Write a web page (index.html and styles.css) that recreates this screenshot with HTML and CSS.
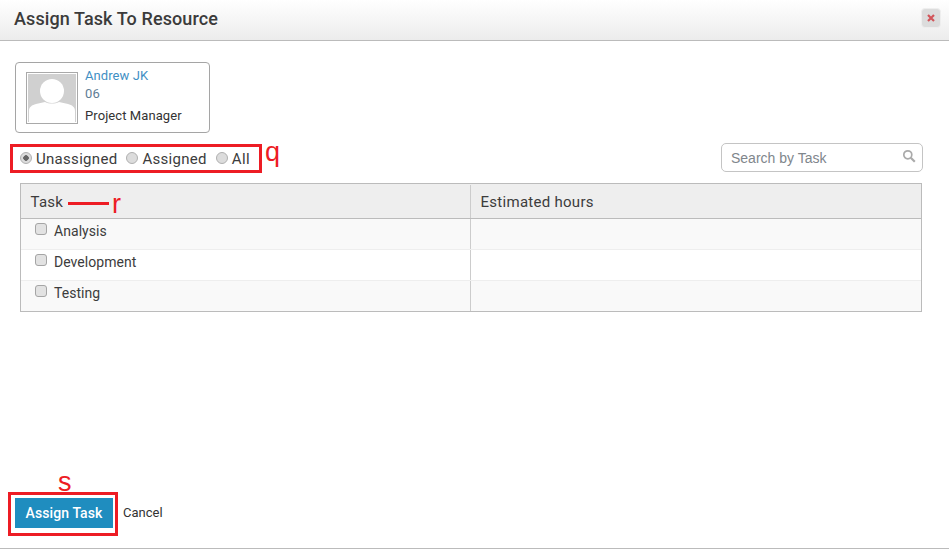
FILE: index.html
```html
<!DOCTYPE html>
<html lang="en">
<head>
<meta charset="utf-8">
<title>Assign Task To Resource</title>
<link rel="stylesheet" href="styles.css">
</head>
<body>
<div class="modal">
  <header class="head">
    <h1 class="title">Assign Task To Resource</h1>
    <button class="close" type="button" aria-label="Close">
      <svg width="8" height="8" viewBox="0 0 8 8"><path d="M1 1l6 6M7 1L1 7" stroke="#d2555a" stroke-width="2.2" fill="none"/></svg>
    </button>
  </header>
  <main class="body">
    <section class="card">
      <svg class="avatar" width="52" height="52" viewBox="0 0 52 52">
        <rect x="0.5" y="0.5" width="51" height="51" fill="#fff" stroke="#a9a9a9"/>
        <rect x="2" y="2" width="48" height="48" fill="#d0d0d0"/>
        <circle cx="26" cy="19" r="12" fill="#fff"/>
        <path d="M3 50V39c0-4 3-6 7-7l9-2c4 2 10 2 14 0l9 2c4 1 7 3 7 7v11z" fill="#fff"/>
      </svg>
      <div class="info">
        <a class="name">Andrew JK</a>
        <span class="code">06</span>
        <span class="role">Project Manager</span>
      </div>
    </section>
    <div class="tools">
      <div class="radios">
        <label class="radio"><span class="dot on"></span>Unassigned</label>
        <label class="radio"><span class="dot"></span>Assigned</label>
        <label class="radio"><span class="dot"></span>All</label>
      </div>
      <div class="search">
        <span class="ph">Search by Task</span>
        <svg width="14" height="14" viewBox="0 0 14 14"><circle cx="5.8" cy="5.8" r="4" fill="none" stroke="#aaa" stroke-width="1.7"/><path d="M8.8 8.8l4 4" stroke="#aaa" stroke-width="2.2"/></svg>
      </div>
    </div>
    <div class="table">
      <div class="row hrow"><div class="cell c1">Task</div><div class="cell">Estimated hours</div></div>
      <div class="row"><div class="cell c1 task"><span class="check"></span>Analysis</div><div class="cell"></div></div>
      <div class="row alt"><div class="cell c1 task"><span class="check"></span>Development</div><div class="cell"></div></div>
      <div class="row"><div class="cell c1 task"><span class="check"></span>Testing</div><div class="cell"></div></div>
    </div>
  </main>
  <footer class="foot">
    <button class="primary" type="button">Assign Task</button>
    <a class="cancel">Cancel</a>
  </footer>
</div>
<div class="mark box-q"></div><span class="letter l-q">q</span>
<div class="mark line-r"></div><span class="letter l-r">r</span>
<div class="mark box-s"></div><span class="letter l-s">s</span>
</body>
</html>
```
FILE: styles.css
```css
* { box-sizing: border-box; }
html, body { margin: 0; height: 549px; overflow: hidden; background: #fff; }
body { font-family: Roboto, "Liberation Sans", sans-serif; color: #333; position: relative; }
.modal { height: 549px; display: flex; flex-direction: column; border-bottom: 1px solid #bbb; }
.head { height: 41px; flex: none; display: flex; align-items: center; justify-content: space-between; padding: 0 8px 0 14px; border-bottom: 1px solid #bbb; background: linear-gradient(#fff, #ececec); }
.title { margin: 0; font-size: 18px; font-weight: 500; color: #3b3b3b; letter-spacing: .1px; position: relative; top: -2px; }
.close { width: 20px; height: 20px; margin-top: -5px; padding: 0; border: 1px solid #eee; border-radius: 4px; background: #dcdcdc; display: flex; align-items: center; justify-content: center; }
.body { flex: 1; display: flex; flex-direction: column; padding: 21px 26px 0 15px; }
.card { width: 195px; height: 71px; border: 1px solid #a5a5a5; border-radius: 4px; display: flex; padding: 9px 10px; gap: 7px; }
.avatar { flex: none; }
.info { display: flex; flex-direction: column; font-size: 13px; line-height: 18px; margin-top: -5px; letter-spacing: .08px; }
.name { color: #3f8fc4; }
.code { color: #5f7d95; }
.role { color: #333; margin-top: 4px; }
.tools { display: flex; justify-content: space-between; align-items: flex-start; margin-top: 10px; height: 40px; padding-left: 5px; }
.radios { display: flex; gap: 9px; padding-top: 7px; font-size: 15px; line-height: 18px; color: #3c3c3c; letter-spacing: .3px; }
.radio { display: flex; align-items: center; }
.dot { width: 12px; height: 12px; margin: -2px 4px 0 0; border-radius: 50%; border: 1px solid #b0b0b0; background: #dcdcdc; display: block; }
.dot.on { background: radial-gradient(circle, #666 0 2.5px, #dcdcdc 3px); }
.search { width: 202px; height: 29px; border: 1px solid #c4c4c4; border-radius: 5px; display: flex; align-items: center; justify-content: space-between; padding: 0 6px 0 9px; font-size: 14px; color: #80868c; font-family: "Liberation Sans", sans-serif; }
.search svg { margin-top: -3px; }
.table { margin-left: 5px; width: 902px; border: 1px solid #bbb; font-size: 14px; }
.row { display: grid; grid-template-columns: 450px 1fr; height: 31px; background: #f9f9f9; border-top: 1px solid #eee; }
.row.alt { background: #fff; }
.hrow { height: 35px; background: #eee; border-top: 0; border-bottom: 1px solid #bbb; font-size: 15px; color: #3c3c3c; letter-spacing: .28px; padding-top: 1px; }
.hrow + .row { border-top: 0; height: 30px; }
.cell { padding: 0 10px 0 9.5px; display: flex; align-items: center; }
.c1 { border-right: 1px solid #ccc; }
.task { padding-left: 14px; color: #3c3c3c; align-items: flex-start; padding-top: 4px; line-height: 16px; letter-spacing: .05px; }
.check { width: 12px; height: 12px; margin: 0 7px 0 0; border: 1px solid #a5a5a5; border-radius: 3px; background: #e2e2e2; flex: none; }
.foot { flex: none; height: 50px; display: flex; align-items: flex-start; padding-left: 15px; }
.primary { width: 98px; height: 30px; border: 0; padding: 0; background: #1f8dbf; color: #fff; font: 500 14px Roboto, sans-serif; letter-spacing: .1px; }
.cancel { margin: 7px 0 0 10px; font-size: 13px; color: #333; }
.mark { position: absolute; border: 3px solid #ed1c24; }
.box-q { left: 10px; top: 144px; width: 252px; height: 29px; }
.box-s { left: 8px; top: 492px; width: 110px; height: 44px; }
.line-r { left: 68px; top: 202px; width: 41px; height: 3px; border-width: 3px 0 0; }
.letter { position: absolute; color: #ed1c24; font-family: "Liberation Sans", sans-serif; font-size: 27px; line-height: 24px; }
.l-q { left: 265px; top: 140px; }
.l-r { left: 112px; top: 192px; }
.l-s { left: 58px; top: 470px; }
```
